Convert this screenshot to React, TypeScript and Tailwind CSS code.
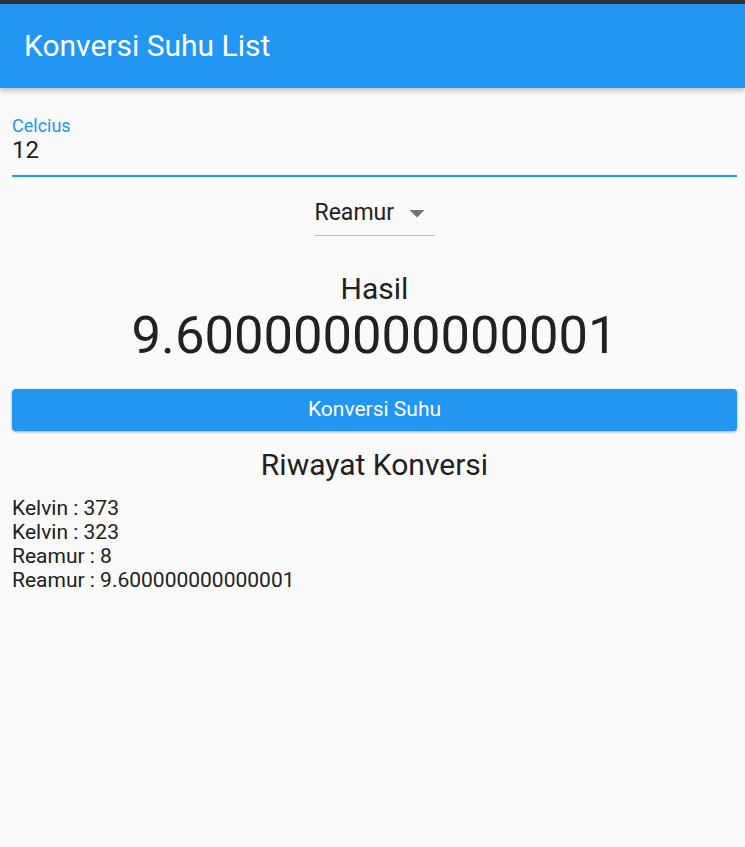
const riwayat = ["Kelvin : 373", "Kelvin : 323", "Reamur : 8", "Reamur : 9.600000000000001"];

export default function App() {
  return (
    <div className="w-[745px] h-[847px] bg-[#fafafa] font-['Roboto',sans-serif] text-[#212121] flex flex-col overflow-hidden">
      <div className="h-[4px] bg-[#333]" />
      <header className="h-[84px] bg-[#2196f3] flex items-center px-6 shadow-[0_2px_6px_rgba(0,0,0,0.3)] relative">
        <h1 className="text-white text-[30px] leading-none">Konversi Suhu List</h1>
      </header>

      <div className="flex flex-col pl-3 pr-2">
        <div className="pt-[28px] border-b-2 border-[#2196f3] pb-[11px]">
          <div className="text-[#2196f3] text-[18px] leading-[20px]">Celcius</div>
          <div className="text-[24px] leading-[28px]">12</div>
        </div>

        <div className="flex justify-center mt-[22px]">
          <div className="w-[120px] h-[37px] flex items-start justify-between border-b border-[#bdbdbd]">
            <span className="text-[23px] leading-[28px]">Reamur</span>
            <svg width="36" height="36" viewBox="0 0 24 24" className="-mt-[4px] shrink-0">
              <path d="M7 10l5 5 5-5z" fill="#757575" />
            </svg>
          </div>
        </div>

        <div className="flex flex-col items-center mt-[35px]">
          <div className="text-[30px] leading-[35px]">Hasil</div>
          <div className="text-[52.5px] leading-[58px]">9.600000000000001</div>
        </div>

        <button className="mt-[25px] h-[42px] w-full rounded-[4px] bg-[#2196f3] text-white text-[21px] shadow-[0_1px_3px_rgba(0,0,0,0.35)]">
          Konversi Suhu
        </button>

        <div className="text-center text-[30px] leading-[36px] mt-[16px]">Riwayat Konversi</div>

        <div className="mt-[13px] flex flex-col text-[21px] leading-[24px]">
          {riwayat.map((r, i) => (
            <div key={i}>{r}</div>
          ))}
        </div>
      </div>
    </div>
  );
}
